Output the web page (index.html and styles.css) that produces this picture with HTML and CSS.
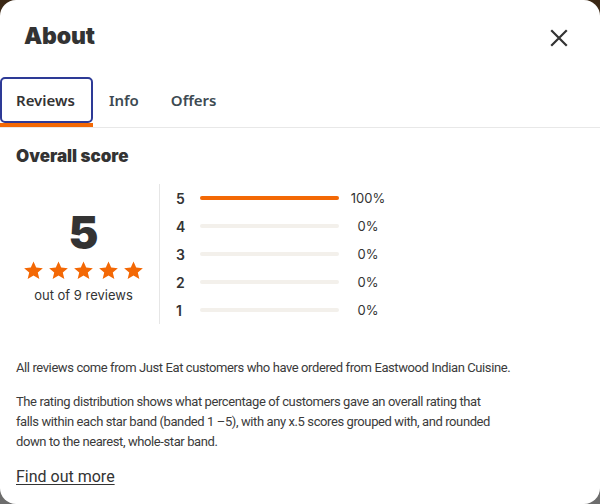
FILE: index.html
```html
<!DOCTYPE html>
<html lang="en">
<head>
    <meta charset="UTF-8">
    <meta name="viewport" content="width=device-width, initial-scale=1.0">
    <title>About</title>
    <link rel="stylesheet" href="styles.css">
</head>
<body>
    <div class="modal">
        <div class="modal-header">
            <h1 class="modal-title">About</h1>
            <button class="close-btn" type="button" aria-label="Close">
                <svg width="18" height="18" viewBox="0 0 18 18">
                    <path d="M2 2L16 16M16 2L2 16" stroke="#333" stroke-width="2.2" stroke-linecap="square" fill="none"/>
                </svg>
            </button>
        </div>

        <div class="tabs">
            <div class="tab active"><span class="tab-label">Reviews</span></div>
            <div class="tab"><span class="tab-label">Info</span></div>
            <div class="tab"><span class="tab-label">Offers</span></div>
        </div>

        <div class="content">
            <h2 class="section-title">Overall score</h2>

            <div class="score">
                <div class="score-summary">
                    <div class="score-number">5</div>
                    <div class="stars">
                        <svg viewBox="0 0 24 24"><path d="M12 1.6l3.1 7 7.6.7-5.8 5 1.8 7.5L12 17.8l-6.7 4 1.8-7.5-5.8-5 7.6-.7z"/></svg>
                        <svg viewBox="0 0 24 24"><path d="M12 1.6l3.1 7 7.6.7-5.8 5 1.8 7.5L12 17.8l-6.7 4 1.8-7.5-5.8-5 7.6-.7z"/></svg>
                        <svg viewBox="0 0 24 24"><path d="M12 1.6l3.1 7 7.6.7-5.8 5 1.8 7.5L12 17.8l-6.7 4 1.8-7.5-5.8-5 7.6-.7z"/></svg>
                        <svg viewBox="0 0 24 24"><path d="M12 1.6l3.1 7 7.6.7-5.8 5 1.8 7.5L12 17.8l-6.7 4 1.8-7.5-5.8-5 7.6-.7z"/></svg>
                        <svg viewBox="0 0 24 24"><path d="M12 1.6l3.1 7 7.6.7-5.8 5 1.8 7.5L12 17.8l-6.7 4 1.8-7.5-5.8-5 7.6-.7z"/></svg>
                    </div>
                    <div class="score-count">out of 9 reviews</div>
                </div>

                <div class="distribution">
                    <div class="dist-row">
                        <span class="dist-label">5</span>
                        <span class="dist-bar"><span class="dist-fill" style="width: 100%"></span></span>
                        <span class="dist-pct">100%</span>
                    </div>
                    <div class="dist-row">
                        <span class="dist-label">4</span>
                        <span class="dist-bar"><span class="dist-fill" style="width: 0%"></span></span>
                        <span class="dist-pct">0%</span>
                    </div>
                    <div class="dist-row">
                        <span class="dist-label">3</span>
                        <span class="dist-bar"><span class="dist-fill" style="width: 0%"></span></span>
                        <span class="dist-pct">0%</span>
                    </div>
                    <div class="dist-row">
                        <span class="dist-label">2</span>
                        <span class="dist-bar"><span class="dist-fill" style="width: 0%"></span></span>
                        <span class="dist-pct">0%</span>
                    </div>
                    <div class="dist-row">
                        <span class="dist-label">1</span>
                        <span class="dist-bar"><span class="dist-fill" style="width: 0%"></span></span>
                        <span class="dist-pct">0%</span>
                    </div>
                </div>
            </div>

            <p class="note">All reviews come from Just Eat customers who have ordered from Eastwood Indian Cuisine.</p>
            <p class="note note-narrow">The rating distribution shows what percentage of customers gave an overall rating that falls within each star band (banded 1 &ndash;5), with any x.5 scores grouped with, and rounded down to the nearest, whole-star band.</p>

            <a class="more-link" href="#">Find out more</a>
        </div>
    </div>
</body>
</html>
```

FILE: styles.css
```css
html, body {
    margin: 0;
    padding: 0;
    height: 100%;
}
body {
    background: linear-gradient(#3a2714, #5a5149 40%, #6d6d6d);
    font-family: Roboto, "Noto Sans", sans-serif;
    color: #333;
}
.modal {
    width: 600px;
    height: 504px;
    background-color: #fff;
    border-radius: 16px;
    overflow: hidden;
}

/* header */
.modal-header {
    height: 76px;
    padding: 0 32px 0 24px;
    display: flex;
    align-items: center;
    justify-content: space-between;
}
.modal-title {
    margin: 0;
    margin-top: -4px;
    font-family: Inter, sans-serif;
    font-weight: 900;
    font-size: 23px;
    letter-spacing: -0.2px;
    color: #333;
}
.close-btn {
    border: none;
    background: none;
    padding: 0;
    width: 18px;
    height: 18px;
    display: flex;
}

/* tabs */
.tabs {
    display: flex;
    padding-top: 1px;
    border-bottom: 1px solid #e8e8e8;
}
.tab {
    border-bottom: 4px solid transparent;
}
.tab.active {
    border-bottom-color: #f36805;
}
.tab-label {
    display: flex;
    align-items: center;
    height: 42px;
    padding: 0 14px;
    border: 2px solid transparent;
    border-radius: 5px;
    font-family: "Noto Sans", sans-serif;
    font-weight: 600;
    font-size: 15px;
    color: #3d4a52;
}
.tab.active .tab-label {
    padding: 0 16px 0 14px;
    border-color: #2d3a96;
    color: #333;
}

/* overall score */
.content {
    padding: 16px 16px 0;
}
.section-title {
    margin: 0;
    font-family: Inter, sans-serif;
    font-weight: 900;
    font-size: 17px;
    line-height: 24px;
    color: #333;
}
.score {
    display: flex;
    margin-top: 16px;
    height: 140px;
}
.score-summary {
    width: 144px;
    padding-right: 8px;
    box-sizing: border-box;
    border-right: 1px solid #e6e6e6;
    display: flex;
    flex-direction: column;
    align-items: center;
    justify-content: center;
    font-family: Inter, sans-serif;
}
.score-number {
    margin-top: 4px;
    font-weight: 900;
    font-size: 45px;
    line-height: 46px;
    color: #333;
}
.stars {
    display: flex;
    gap: 4px;
    margin-top: 4px;
}
.stars svg {
    width: 21px;
    height: 21px;
    fill: #f36805;
}
.score-count {
    margin-top: 6px;
    font-size: 13px;
    color: #333;
}

.distribution {
    padding-left: 16px;
    font-family: Inter, sans-serif;
}
.dist-row {
    height: 28px;
    display: flex;
    align-items: center;
}
.dist-label {
    width: 24px;
    font-weight: 600;
    font-size: 14px;
    color: #333;
}
.dist-bar {
    width: 139px;
    height: 4px;
    border-radius: 2px;
    background-color: #f3f0eb;
}
.dist-fill {
    display: block;
    height: 100%;
    border-radius: 2px;
    background-color: #f36805;
}
.dist-pct {
    width: 46px;
    margin-left: 6px;
    text-align: center;
    font-size: 13px;
    color: #333;
}

/* notes */
.note {
    margin: 0 0 14px;
    font-size: 13px;
    line-height: 20px;
    letter-spacing: -0.4px;
    color: #3b3b3b;
}
.note-narrow {
    max-width: 482px;
}
.score + .note {
    margin-top: 34px;
}
.more-link {
    display: inline-block;
    margin-top: 1px;
    font-size: 16px;
    color: #333;
    text-decoration: underline;
    text-underline-offset: 2px;
}
```
